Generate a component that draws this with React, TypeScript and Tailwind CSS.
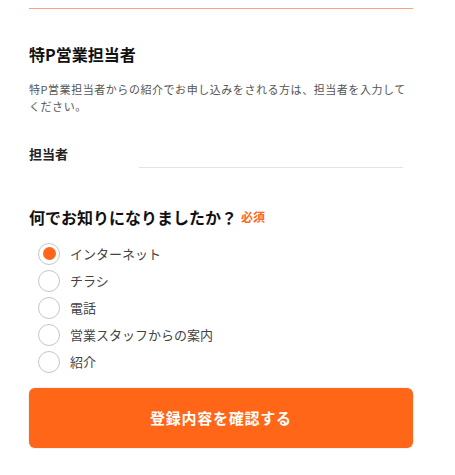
import React, { useState } from "react";

const options = ["インターネット", "チラシ", "電話", "営業スタッフからの案内", "紹介"];

export default function App() {
  const [selected, setSelected] = useState(0);
  const [name, setName] = useState("");
  return (
    <div
      className="w-[455px] min-h-[475px] bg-white"
      style={{ fontFamily: '"Noto Sans CJK JP", "Noto Sans", sans-serif' }}
    >
      <div className="ml-[29px] w-[384px] pt-[8px]">
        <div className="border-t border-[#f9a27e]" />
        <h2 className="mt-[33px] text-[16px] leading-[24px] font-bold text-[#111]">特P営業担当者</h2>
        <p className="mt-[15px] text-[11px] leading-[17px] tracking-[0.55px] text-[#555]">
          特P営業担当者からの紹介でお申し込みをされる方は、担当者を入力してください。
        </p>
        <div className="mt-[29px] flex items-start">
          <label className="w-[110px] text-[13px] leading-[20px] font-bold text-[#222]">担当者</label>
          <input
            value={name}
            onChange={(e) => setName(e.target.value)}
            className="h-[24px] w-[264px] border-b border-[#e3e3e3] bg-transparent text-[13px] outline-none"
          />
        </div>
        <div className="mt-[37px] flex items-center">
          <h3 className="text-[16px] leading-[24px] font-bold text-[#111]">何でお知りになりましたか？</h3>
          <span className="ml-[4px] text-[12px] font-bold text-[#ff6617]">必須</span>
        </div>
        <div className="mt-[11px] flex flex-col">
          {options.map((o, i) => (
            <label key={o} className="flex h-[27px] items-center cursor-pointer" onClick={() => setSelected(i)}>
              <span className="ml-[9px] flex h-[22px] w-[22px] items-center justify-center rounded-full border border-[#c6c6c6] bg-white">
                {selected === i && <span className="h-[13px] w-[13px] rounded-full bg-[#ff6617]" />}
              </span>
              <span className="ml-[10px] text-[13px] leading-[20px] text-[#444]">{o}</span>
            </label>
          ))}
        </div>
        <button className="mt-[13px] flex h-[60px] w-[384px] items-center justify-center rounded-[6px] bg-[#ff6617] text-[15px] font-bold tracking-[0.05em] text-white shadow-[0_0_2px_rgba(0,0,0,0.2)]">
          登録内容を確認する
        </button>
      </div>
    </div>
  );
}
